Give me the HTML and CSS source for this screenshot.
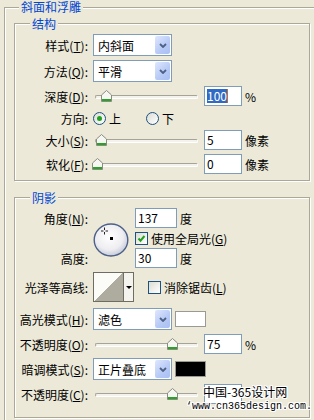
FILE: index.html
```html
<!DOCTYPE html>
<html lang="zh-CN">
<head>
    <meta charset="UTF-8">
    <meta name="viewport" content="width=device-width, initial-scale=1.0">
    <title>斜面和浮雕</title>
    <link rel="stylesheet" href="styles.css">
</head>
<body>
<div class="dialog">
    <fieldset class="group outer">
        <legend>斜面和浮雕</legend>

        <!-- 结构 -->
        <fieldset class="group inner">
            <legend>结构</legend>
            <div class="rows structure">
                <div class="row tall">
                    <span class="lbl">样式(<u>T</u>):</span>
                    <div class="combo">
                        <span>内斜面</span>
                        <span class="drop"><svg width="8" height="5" viewBox="0 0 8 5"><path d="M1 1l3 3 3-3" fill="none" stroke="#4d6185" stroke-width="1.8"/></svg></span>
                    </div>
                </div>
                <div class="row tall">
                    <span class="lbl">方法(<u>Q</u>):</span>
                    <div class="combo">
                        <span>平滑</span>
                        <span class="drop"><svg width="8" height="5" viewBox="0 0 8 5"><path d="M1 1l3 3 3-3" fill="none" stroke="#4d6185" stroke-width="1.8"/></svg></span>
                    </div>
                </div>
                <div class="row">
                    <span class="lbl">深度(<u>D</u>):</span>
                    <div class="slider">
                        <div class="track"></div>
                        <svg class="thumb" style="left:8px" width="11" height="12" viewBox="0 0 11 12"><path d="M5.5 .5l5 4.5v6.5H.5V5z" fill="#f6f6f2" stroke="#8b8b80"/><path d="M1 9h9v2H1z" fill="#27a327"/></svg>
                    </div>
                    <div class="num"><span class="sel">100</span><span class="caret"></span></div>
                    <span class="unit">%</span>
                </div>
                <div class="row short">
                    <span class="lbl">方向:</span>
                    <span class="radio on"></span><span class="opt">上</span>
                    <span class="radio"></span><span class="opt">下</span>
                </div>
                <div class="row">
                    <span class="lbl">大小(<u>S</u>):</span>
                    <div class="slider">
                        <div class="track"></div>
                        <svg class="thumb" style="left:3px" width="11" height="12" viewBox="0 0 11 12"><path d="M5.5 .5l5 4.5v6.5H.5V5z" fill="#f6f6f2" stroke="#8b8b80"/><path d="M1 9h9v2H1z" fill="#27a327"/></svg>
                    </div>
                    <div class="num">5</div>
                    <span class="unit">像素</span>
                </div>
                <div class="row">
                    <span class="lbl">软化(<u>F</u>):</span>
                    <div class="slider">
                        <div class="track"></div>
                        <svg class="thumb" style="left:-1px" width="11" height="12" viewBox="0 0 11 12"><path d="M5.5 .5l5 4.5v6.5H.5V5z" fill="#f6f6f2" stroke="#8b8b80"/><path d="M1 9h9v2H1z" fill="#27a327"/></svg>
                    </div>
                    <div class="num">0</div>
                    <span class="unit">像素</span>
                </div>
            </div>
        </fieldset>

        <!-- 阴影 -->
        <fieldset class="group inner second">
            <legend>阴影</legend>
            <div class="rows shading">
                <div class="angle">
                    <span class="lbl a1">角度(<u>N</u>):</span>
                    <svg class="dial" width="36" height="34" viewBox="0 0 36 34">
                        <defs>
                            <radialGradient id="dialFill" cx="45%" cy="40%" r="62%">
                                <stop offset="0" stop-color="#ffffff"/>
                                <stop offset=".65" stop-color="#eeeef2"/>
                                <stop offset="1" stop-color="#c3c7d6"/>
                            </radialGradient>
                        </defs>
                        <ellipse cx="18" cy="17" rx="16.8" ry="16" fill="url(#dialFill)" stroke="#4c6089" stroke-width="1.4"/>
                        <path d="M11.5 4.5v2.5M11.5 9v2.5M8 8h2.5M12.5 8H15" stroke="#222" stroke-width="1"/>
                        <rect x="17" y="14" width="3" height="3" fill="#000"/>
                    </svg>
                    <div class="pair a2">
                        <div class="num wide">137</div>
                        <span class="unit">度</span>
                    </div>
                    <div class="pair a3">
                        <span class="check on"><svg width="11" height="11" viewBox="0 0 11 11"><path d="M2.5 5.5l2 2.2 4-4.7" fill="none" stroke="#21a121" stroke-width="2"/></svg></span>
                        <span class="opt">使用全局光(<u>G</u>)</span>
                    </div>
                    <span class="lbl a4">高度:</span>
                    <div class="pair a5">
                        <div class="num wide">30</div>
                        <span class="unit">度</span>
                    </div>
                </div>

                <div class="row contour-row">
                    <span class="lbl">光泽等高线:</span>
                    <div class="contour">
                        <div class="curve"></div>
                        <div class="arrow"><i></i></div>
                    </div>
                    <span class="check"></span>
                    <span class="opt">消除锯齿(<u>L</u>)</span>
                </div>

                <div class="row tall">
                    <span class="lbl">高光模式(<u>H</u>):</span>
                    <div class="combo">
                        <span>滤色</span>
                        <span class="drop"><svg width="8" height="5" viewBox="0 0 8 5"><path d="M1 1l3 3 3-3" fill="none" stroke="#4d6185" stroke-width="1.8"/></svg></span>
                    </div>
                    <span class="swatch white"></span>
                </div>
                <div class="row">
                    <span class="lbl">不透明度(<u>O</u>):</span>
                    <div class="slider">
                        <div class="track"></div>
                        <svg class="thumb" style="left:74px" width="11" height="12" viewBox="0 0 11 12"><path d="M5.5 .5l5 4.5v6.5H.5V5z" fill="#f6f6f2" stroke="#8b8b80"/><path d="M1 9h9v2H1z" fill="#27a327"/></svg>
                    </div>
                    <div class="num">75</div>
                    <span class="unit">%</span>
                </div>
                <div class="row tall">
                    <span class="lbl">暗调模式(<u>S</u>):</span>
                    <div class="combo">
                        <span>正片叠底</span>
                        <span class="drop"><svg width="8" height="5" viewBox="0 0 8 5"><path d="M1 1l3 3 3-3" fill="none" stroke="#4d6185" stroke-width="1.8"/></svg></span>
                    </div>
                    <span class="swatch black"></span>
                </div>
                <div class="row">
                    <span class="lbl">不透明度(<u>C</u>):</span>
                    <div class="slider">
                        <div class="track"></div>
                        <svg class="thumb" style="left:74px" width="11" height="12" viewBox="0 0 11 12"><path d="M5.5 .5l5 4.5v6.5H.5V5z" fill="#f6f6f2" stroke="#8b8b80"/><path d="M1 9h9v2H1z" fill="#27a327"/></svg>
                    </div>
                    <div class="num"></div>
                </div>
            </div>
        </fieldset>
    </fieldset>

    <!-- watermark over the bottom corner -->
    <div class="mark">
        <div class="mark-cn">中国-365设计网</div>
        <div class="mark-url">‘www.cn365design.com.</div>
    </div>
</div>
</body>
</html>
```

FILE: styles.css
```css
body {
    margin: 0;
    width: 314px;
    height: 420px;
    overflow: hidden;
    background-color: #ece9d8;
    font-family: "Noto Sans CJK SC", "Liberation Sans", sans-serif;
    font-size: 12px;
    color: #000;
}

.dialog {
    position: relative;
    height: 420px;
    overflow: hidden;
}

/* XP style etched group boxes */
.group {
    margin: 0;
    padding: 0;
    min-width: 0;
    border: 1px solid #aca899;
    box-shadow: 1px 1px 0 #fff, inset 1px 1px 0 #fff;
}

.group > legend {
    padding: 0 2px;
    line-height: 13px;
    color: #0046d5;
    background-color: #ece9d8;
}

.outer {
    margin-left: 4px;
    width: 316px;
    padding-bottom: 20px;
    border-right-color: transparent;
    box-shadow: inset 1px 1px 0 #fff;
}

.outer > legend {
    margin-left: 14px;
    line-height: 14px;
}

.inner {
    margin: 3px 0 0 9px;
    width: 296px;
    box-sizing: border-box;
}

.inner > legend {
    margin-left: 15px;
}

.inner.second {
    margin-top: 10px;
}

.rows {
    display: flex;
    flex-direction: column;
    gap: 4px;
}

.structure {
    padding: 4px 0 6px;
}

.shading {
    padding: 4px 0 13px;
}

.row {
    display: flex;
    align-items: center;
    height: 20px;
}

.row.tall {
    height: 22px;
}

.row.short {
    height: 16px;
}

.lbl {
    flex: none;
    width: 73px;
    margin-right: 5px;
    text-align: right;
    white-space: nowrap;
}

u {
    text-underline-offset: 1px;
}

/* combo box */
.combo {
    display: flex;
    align-items: center;
    width: 79px;
    height: 22px;
    box-sizing: border-box;
    border: 1px solid #7f9db9;
    background-color: #fff;
    padding-left: 4px;
}

.drop {
    margin-left: auto;
    margin-right: 1px;
    width: 15px;
    height: 18px;
    border-radius: 2px;
    background: linear-gradient(135deg, #dfe7fd, #b6c9f6 60%, #a9bff3);
    display: flex;
    align-items: center;
    justify-content: center;
}

.drop svg {
    display: block;
}

/* slider */
.slider {
    position: relative;
    flex: none;
    width: 105px;
    height: 20px;
}

.track {
    position: absolute;
    left: 2px;
    top: 9px;
    width: 101px;
    height: 2px;
    border: 1px solid #a6a498;
    border-bottom-color: #fff;
    border-right-color: #fff;
    border-radius: 2px;
    background-color: #f3f2ec;
}

.thumb {
    position: absolute;
    top: 4px;
}

/* text fields */
.num {
    flex: none;
    width: 38px;
    height: 20px;
    box-sizing: border-box;
    border: 1px solid #7f9db9;
    background-color: #fff;
    padding-left: 2px;
    line-height: 18px;
    margin-left: 6px;
    display: flex;
    align-items: center;
}

.num.wide {
    width: 42px;
    margin-left: 0;
}

.sel {
    background-color: #316ac5;
    color: #fff;
    line-height: 14px;
}

.caret {
    width: 1px;
    height: 14px;
    background-color: #c07030;
}

.unit {
    margin-left: 3px;
}

/* radio and check */
.radio {
    flex: none;
    position: relative;
    width: 11px;
    height: 11px;
    border: 1px solid #1c5180;
    border-radius: 50%;
    background: linear-gradient(135deg, #dcdcd4, #fff);
}

.radio.on::after {
    content: "";
    position: absolute;
    left: 3px;
    top: 3px;
    width: 5px;
    height: 5px;
    border-radius: 50%;
    background-color: #21a121;
}

.opt {
    margin-left: 3px;
    margin-right: 25px;
    white-space: nowrap;
}

.check {
    flex: none;
    width: 11px;
    height: 11px;
    border: 1px solid #1c5180;
    background: linear-gradient(135deg, #dcdcd4, #fff);
    display: flex;
}

/* angle block */
.angle {
    display: grid;
    grid-template-columns: 78px 42px 1fr;
    grid-template-rows: 20px 12px 20px;
    row-gap: 4px;
    align-items: center;
}

.angle .lbl {
    width: 73px;
}

.a1 { grid-column: 1; grid-row: 1; }
.a4 { grid-column: 1; grid-row: 3; }
.a2 { grid-column: 3; grid-row: 1; }
.a3 { grid-column: 3; grid-row: 2; }
.a5 { grid-column: 3; grid-row: 3; }

.dial {
    grid-column: 2;
    grid-row: 1 / 4;
    align-self: start;
    margin-top: 15px;
    display: block;
}

.pair {
    display: flex;
    align-items: center;
}

/* contour picker */
.contour-row {
    height: 30px;
    margin-bottom: 2px;
}

.contour {
    flex: none;
    display: flex;
    width: 41px;
    height: 30px;
    box-sizing: border-box;
    border: 1px solid #6f6d62;
    margin-right: 14px;
}

.curve {
    width: 29px;
    border-right: 1px solid #6f6d62;
    background: linear-gradient(to top left, #aeac9f 50%, #fbfbf8 50%);
}

.arrow {
    flex: 1;
    display: flex;
    align-items: center;
    justify-content: center;
    background-color: #f4f3ee;
}

.arrow i {
    width: 0;
    height: 0;
    border-left: 3px solid transparent;
    border-right: 3px solid transparent;
    border-top: 3px solid #000;
}

.contour-row .opt {
    margin-left: 3px;
}

/* colour swatches */
.swatch {
    flex: none;
    width: 31px;
    height: 16px;
    box-sizing: border-box;
    margin-left: 3px;
    border: 1px solid #9a9a94;
}

.swatch.white {
    background-color: #fff;
}

.swatch.black {
    background-color: #000;
}

/* watermark */
.mark {
    position: absolute;
    left: 186px;
    top: 384px;
    text-shadow: 1px 0 #fff, -1px 0 #fff, 0 1px #fff, 0 -1px #fff, 1px 1px #fff, -1px -1px #fff, 1px -1px #fff, -1px 1px #fff;
}

.mark-cn {
    margin-left: 17px;
    font-size: 12px;
    line-height: 15px;
}

.mark-url {
    font-family: "Liberation Mono", monospace;
    font-size: 10px;
    line-height: 12px;
    margin-top: 2px;
}
```
